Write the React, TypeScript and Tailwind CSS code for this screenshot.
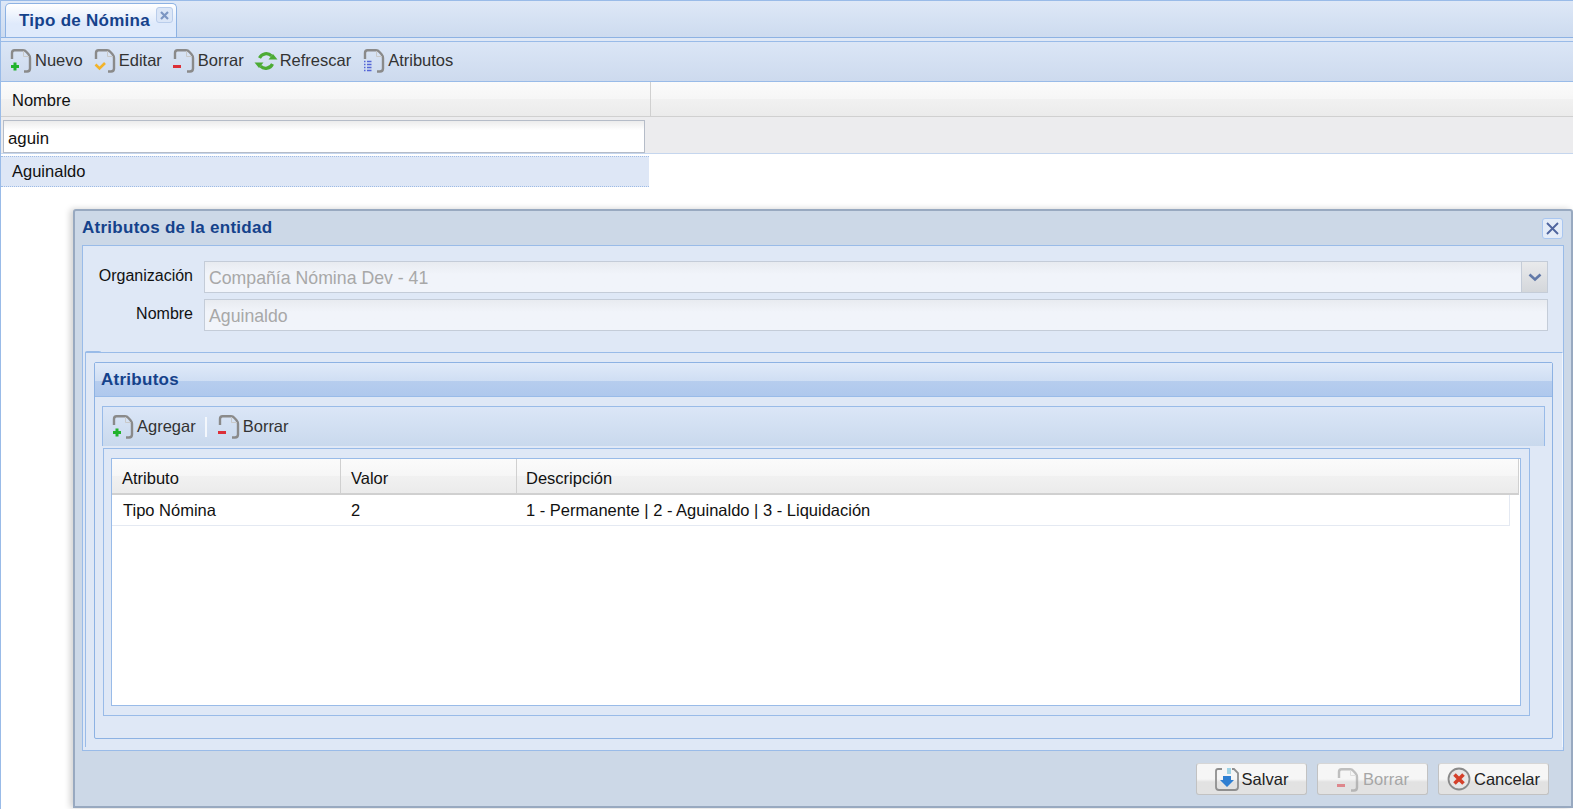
type Sign = 'plus' | 'check' | 'minus' | 'list';

function DocIcon({ sign, className = '' }: { sign: Sign; className?: string }) {
  return (
    <svg width="24" height="25" viewBox="0 0 24 25" fill="none" className={`shrink-0 ${className}`}>
      <path d="M3 11V5Q3 2.2 5.5 2.2H14Q16 2.2 17.5 4L19.5 6.2Q21 8 21 10V20.5Q21 23.5 18 23.5H15" stroke="#8a8a8a" strokeWidth="2.4" />
      <path d="M14.5 3V8.5H20" stroke="#c9c9c9" strokeWidth="1" />
      {sign === 'plus' && <path d="M6 14.5V22.5M2 18.5H10" stroke="#22b32c" strokeWidth="3" />}
      {sign === 'check' && <path d="M2.5 16.5L6.5 20.5L12 15" stroke="#f2b32a" strokeWidth="2.6" />}
      {sign === 'minus' && <path d="M1 18.5H9" stroke="#dc2f38" strokeWidth="3" />}
      {sign === 'list' && (
        <path d="M2 13.5H3.5M5 13.5H9.5M2 16.5H3.5M5 16.5H9.5M2 19.5H3.5M5 19.5H9.5M2 22.5H3.5M5 22.5H9.5" stroke="#5566d6" strokeWidth="1.7" />
      )}
    </svg>
  );
}

function RefreshIcon() {
  return (
    <svg width="24" height="24" viewBox="0 0 24 24" fill="none" className="shrink-0">
      <path d="M5.5 9A7.5 7.5 0 0 1 17.5 6.8" stroke="#4cab34" strokeWidth="3.2" />
      <path d="M18.5 15A7.5 7.5 0 0 1 6.5 17.2" stroke="#4cab34" strokeWidth="3.2" />
      <path d="M14.5 10.5H23.5L19 5Z" fill="#4cab34" />
      <path d="M0.5 13.5H9.5L5 19Z" fill="#4cab34" />
    </svg>
  );
}

function SaveIcon() {
  return (
    <svg width="24" height="24" viewBox="0 0 24 24" fill="none" className="shrink-0">
      <path d="M7 2H3Q1 2 1 4V20Q1 23 4 23H20Q23 23 23 20V6L19 2H17" stroke="#8f8f8f" strokeWidth="1.8" />
      <rect x="12" y="1" width="4" height="6" fill="#9fd3e6" />
      <path d="M8 9H16V13H19L12 20L5 13H8Z" fill="#2f7fd2" />
    </svg>
  );
}

function CancelIcon() {
  return (
    <svg width="24" height="24" viewBox="0 0 24 24" fill="none" className="shrink-0">
      <circle cx="12" cy="12" r="10.5" fill="#e6e6e6" stroke="#8a8a8a" strokeWidth="1.8" />
      <path d="M7.5 7.5L16.5 16.5M16.5 7.5L7.5 16.5" stroke="#d4402a" strokeWidth="3.6" />
    </svg>
  );
}

function ToolItem({ icon, label, className = '' }: { icon: React.ReactNode; label: string; className?: string }) {
  return (
    <div className={`flex items-center gap-[2px] ${className}`}>
      {icon}
      <span className="text-[16.5px] text-[#333]">{label}</span>
    </div>
  );
}

function FooterButton({ icon, label, disabled = false }: { icon: React.ReactNode; label: string; disabled?: boolean }) {
  return (
    <div
      className={`flex h-[32px] w-[111px] items-center justify-center gap-[3px] rounded-[3px] border border-[#c2c2c2] border-t-[#d6d6d6] bg-gradient-to-b from-[#f6f6f6] from-50% to-[#e2e2e2] to-60% text-[16.5px] ${
        disabled ? 'text-[#a6a6a6]' : 'text-[#222]'
      }`}
    >
      <span className={disabled ? 'flex opacity-50' : 'flex'}>{icon}</span>
      {label}
    </div>
  );
}

function Field({ label, value, combo = false }: { label: string; value: string; combo?: boolean }) {
  return (
    <div className="flex h-[32px] items-center">
      <label className="mb-[3px] w-[107px] shrink-0 text-right text-[16px] text-[#111]">{label}</label>
      <div className="ml-[11px] flex h-full min-w-0 flex-1 border border-[#c4ccd8] bg-gradient-to-b from-[#e8ebf0] to-[#f1f4fa] to-40%">
        <span className="flex-1 pl-[4px] text-[17.7px] leading-[32px] text-[#a8a8a8]">{value}</span>
        {combo && (
          <span className="flex w-[26px] items-center justify-center border-l border-[#c4ccd8] bg-gradient-to-b from-[#e9eaec] to-[#d4d7db]">
            <svg width="14" height="9" viewBox="0 0 14 9" fill="none">
              <path d="M1.5 1.5L7 6.5L12.5 1.5" stroke="#6279a8" strokeWidth="2.6" />
            </svg>
          </span>
        )}
      </div>
    </div>
  );
}

export default function App() {
  return (
    <div className="relative h-[809px] w-[1573px] overflow-hidden bg-white font-['Liberation_Sans',Arial,sans-serif]">
      <div className="flex h-full flex-col border-l border-t border-[#99bbe8]">
        {/* tab strip */}
        <div className="flex h-[37px] items-end border-b border-[#8db2e3] bg-gradient-to-b from-[#deE8f7] to-[#cddbef] pl-[4px]">
          <div className="flex h-[34px] w-[172px] rounded-t-[5px] border border-b-0 border-[#8db2e3] bg-gradient-to-b from-white to-[#dfeafb] to-60% pl-[13px]">
            <span className="mt-[7px] text-[17px] font-bold leading-[20px] tracking-[0.27px] text-[#15428b]">Tipo de Nómina</span>
            <span className="ml-[6px] mt-[3px] flex h-[16px] w-[17px] items-center justify-center rounded-[3px] border border-[#b9cdeb] bg-[#dbe6f7]">
              <svg width="9" height="9" viewBox="0 0 9 9" fill="none">
                <path d="M1 1L8 8M8 1L1 8" stroke="#7d96c2" strokeWidth="2.2" />
              </svg>
            </span>
          </div>
        </div>
        <div className="h-[3px] bg-[#dfe8f6]" />
        {/* main toolbar */}
        <div className="flex h-[41px] items-center gap-[10px] border-b border-t border-[#99bbe8] bg-gradient-to-b from-[#dbe6f6] to-[#cddaee] pb-[2px] pl-[8px]">
          <ToolItem icon={<DocIcon sign="plus" />} label="Nuevo" />
          <ToolItem icon={<DocIcon sign="check" />} label="Editar" />
          <ToolItem icon={<DocIcon sign="minus" />} label="Borrar" />
          <ToolItem icon={<RefreshIcon />} label="Refrescar" />
          <ToolItem icon={<DocIcon sign="list" />} label="Atributos" className="ml-[1px]" />
        </div>
        {/* grid */}
        <div className="flex h-[35px] border-b border-[#d0d0d0] bg-[linear-gradient(#fbfbfb,#f6f6f6_50%,#f1f1f1_50%,#ebebeb)]">
          <div className="w-[650px] border-r border-[#d0d0d0] pl-[11px] text-[16.5px] leading-[37px] text-[#111]">Nombre</div>
        </div>
        <div className="h-[37px] border-b border-[#c5d6ee] bg-[#ececee] pl-[2px] pt-[3px]">
          <div className="h-[33px] w-[642px] border border-[#b5bcc8] bg-gradient-to-b from-[#ececec] to-white to-30% pl-[4px] text-[16.8px] leading-[36px] text-[#111]">
            aguin
          </div>
        </div>
        <div className="mt-[2px] h-[31px] w-[648px] border-y border-dotted border-[#9dbbe6] bg-[#dee7f6] pl-[11px] text-[16.5px] leading-[29px] text-[#111]">
          Aguinaldo
        </div>
      </div>

      {/* modal window */}
      <div className="absolute left-[73px] top-[209px] flex h-[599px] w-[1500px] flex-col rounded-t-[3px] border-2 border-[#98a9c0] bg-[#ccd8e7] px-[7px] shadow-[-3px_0_6px_rgba(0,0,0,0.18)]">
        <div className="flex h-[34px] shrink-0 items-center justify-between">
          <span className="text-[17px] font-bold tracking-[0.27px] text-[#15428b]">Atributos de la entidad</span>
          <span className="mr-[1px] flex h-[21px] w-[21px] items-center justify-center rounded-[3px] border border-[#a9c6f0] bg-[#e4ecf8]">
            <svg width="13" height="13" viewBox="0 0 13 13" fill="none">
              <path d="M1 1L12 12M12 1L1 12" stroke="#4f659f" strokeWidth="1.9" />
            </svg>
          </span>
        </div>
        <div className="flex h-[506px] shrink-0 flex-col border border-[#99bbe8] bg-[#dfe8f6] pl-[2px]">
          <div className="flex flex-col gap-[6px] pl-[1px] pr-[15px] pt-[15px]">
            <Field label="Organización" value="Compañía Nómina Dev - 41" combo />
            <Field label="Nombre" value="Aguinaldo" />
          </div>
          {/* tab panel */}
          <div className="relative mt-[21px] flex h-[395px] flex-col border-l border-r border-t border-[#99bbe8] border-r-[#f1f6fd] pl-[8px] pt-[9px]">
            <span className="absolute -left-[1px] -top-[2px] h-[2px] w-[16px] rounded-t-[2px] border-x border-t border-[#99bbe8]" />
            <div className="flex h-[377px] w-[1459px] flex-col rounded-[2px] border border-[#8db2e3] pl-[7px] pr-[7px]">
              <div className="-mx-[7px] flex h-[34px] shrink-0 items-center border-b border-[#99bbe8] bg-[linear-gradient(#e0eaf9,#cfdef3_55%,#b6cdee_55%,#afc8ed)] pl-[6px] pt-[1px] text-[17px] font-bold tracking-[0.27px] text-[#15428b]">
                Atributos
              </div>
              <div className="mt-[9px] flex h-[40px] shrink-0 items-center border-x border-t border-[#99bbe8] bg-gradient-to-b from-[#dbe6f7] to-[#c9d9ed] pl-[8px]">
                <ToolItem icon={<DocIcon sign="plus" />} label="Agregar" />
                <span className="ml-[9px] mr-[10px] h-[20px] w-[2px] bg-[#f3f7fc]" />
                <ToolItem icon={<DocIcon sign="minus" />} label="Borrar" />
              </div>
              <div className="mb-[22px] ml-[1px] mr-[15px] mt-[2px] flex-1 border border-[#99bbe8] pb-[9px] pl-[7px] pr-[8px] pt-[9px]">
                <div className="h-full border border-[#99bbe8] bg-white">
                  <div className="mr-[1px] flex h-[36px] border-b-2 border-r border-[#d0d0d0] bg-[linear-gradient(#fbfbfb,#f6f6f6_50%,#f1f1f1_50%,#ebebeb)] text-[16.5px] leading-[38px] text-[#111]">
                    <div className="w-[229px] border-r border-[#d0d0d0] pl-[10px]">Atributo</div>
                    <div className="w-[176px] border-r border-[#d0d0d0] pl-[10px]">Valor</div>
                    <div className="pl-[9px]">Descripción</div>
                  </div>
                  <div className="mr-[10px] flex h-[31px] border-b border-r border-[#e4e9f2] text-[16.5px] leading-[31px] text-[#111]">
                    <div className="w-[229px] pl-[11px]">Tipo Nómina</div>
                    <div className="w-[176px] pl-[10px]">2</div>
                    <div className="pl-[9px]">1 - Permanente | 2 - Aguinaldo | 3 - Liquidación</div>
                  </div>
                </div>
              </div>
            </div>
          </div>
        </div>
        <div className="mt-[12px] flex justify-end gap-[10px] pr-[15px]">
          <FooterButton icon={<SaveIcon />} label="Salvar" />
          <FooterButton icon={<DocIcon sign="minus" />} label="Borrar" disabled />
          <FooterButton icon={<CancelIcon />} label="Cancelar" />
        </div>
      </div>
    </div>
  );
}
